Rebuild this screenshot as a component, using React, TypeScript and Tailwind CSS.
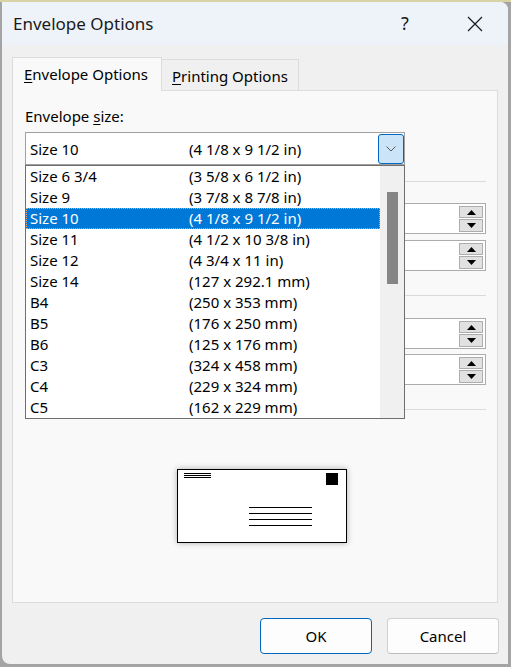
import React from 'react';

const SIZES: { name: string; dim: string }[] = [
  { name: 'Size 6 3/4', dim: '(3 5/8 x 6 1/2 in)' },
  { name: 'Size 9', dim: '(3 7/8 x 8 7/8 in)' },
  { name: 'Size 10', dim: '(4 1/8 x 9 1/2 in)' },
  { name: 'Size 11', dim: '(4 1/2 x 10 3/8 in)' },
  { name: 'Size 12', dim: '(4 3/4 x 11 in)' },
  { name: 'Size 14', dim: '(127 x 292.1 mm)' },
  { name: 'B4', dim: '(250 x 353 mm)' },
  { name: 'B5', dim: '(176 x 250 mm)' },
  { name: 'B6', dim: '(125 x 176 mm)' },
  { name: 'C3', dim: '(324 x 458 mm)' },
  { name: 'C4', dim: '(229 x 324 mm)' },
  { name: 'C5', dim: '(162 x 229 mm)' },
];

const SELECTED = 'Size 10';

const SpinBox: React.FC<{ className?: string }> = ({ className = '' }) => (
  <div className={`w-[461px] flex justify-end ${className}`}>
    <div className="w-[190px] h-[31px] border border-[#acacac] bg-white flex justify-end">
      <div className="w-[24px] mr-[2px] pt-[2px] flex flex-col gap-px">
        <div className="h-[12px] bg-[#e1e1e1] border border-[#adadad] flex items-center justify-center">
          <svg width="9" height="5" viewBox="0 0 9 5"><path d="M0 5 L4.5 0 L9 5 Z" fill="#000" /></svg>
        </div>
        <div className="h-[13px] bg-[#e1e1e1] border border-[#adadad] flex items-center justify-center">
          <svg width="9" height="5" viewBox="0 0 9 5"><path d="M0 0 L4.5 5 L9 0 Z" fill="#000" /></svg>
        </div>
      </div>
    </div>
  </div>
);

const Separator: React.FC<{ className?: string }> = ({ className = '' }) => (
  <div className={`w-[461px] h-px bg-[#dadada] ${className}`}></div>
);

const App: React.FC = () => {
  return (
    <div className="w-[511px] h-[667px] bg-[#a4a4a4] overflow-hidden text-black font-['Noto_Sans','DejaVu_Sans',sans-serif]">
      <div className="h-[2px] bg-[#d8d3a5]"></div>

      <div className="ml-[2px] w-[506px] h-[662px] rounded-tr-[8px] rounded-bl-[8px] bg-[#f0f0f0] overflow-hidden flex flex-col">
        {/* Title bar */}
        <div className="h-[43px] bg-[#eef3f9] flex items-center justify-between shrink-0">
          <span className="pl-[11px] text-[17px] leading-[23px] text-[#1a1a1a]">Envelope Options</span>
          <div className="flex items-center gap-[24px] mr-[10px]">
            <span className="w-[46px] text-center text-[18px] leading-[23px] text-[#1a1a1a]">?</span>
            <span className="w-[46px] flex justify-center">
              <svg width="16" height="16" viewBox="0 0 16 16">
                <path d="M1 1 L15 15 M15 1 L1 15" stroke="#1a1a1a" strokeWidth="1.2" />
              </svg>
            </span>
          </div>
        </div>

        {/* Body */}
        <div className="flex-1 flex flex-col pt-[12px]">
          <div className="px-[10px]">
            {/* Tabs */}
            <div className="flex items-end h-[33px]">
              <div className="relative z-10 -mb-px w-[150px] h-[34px] bg-[#f9f9f9] border border-b-0 border-[#dcdcdc] pl-[11px] pt-[6px] text-[15px] leading-[20px]">
                <span className="underline underline-offset-2">E</span>nvelope Options
              </div>
              <div className="w-[137px] h-[31px] bg-[#f0f0f0] border-t border-r border-[#dcdcdc] pl-[10px] pt-[6px] text-[15px] leading-[20px]">
                <span className="underline underline-offset-2">P</span>rinting Options
              </div>
            </div>

            {/* Panel */}
            <div className="h-[513px] border border-[#dcdcdc] bg-[#f9f9f9] px-[12px]">
              <div className="mt-[15px] text-[15px] leading-[20px]">
                Envelope <span className="underline underline-offset-2">s</span>ize:
              </div>

              {/* Combo box with open list */}
              <div className="relative mt-[6px] w-[380px]">
                <div className="h-[33px] border border-[#a0a0a0] bg-white flex items-center">
                  <span className="pl-[4px] w-[163px] text-[15px] leading-[20px]">Size 10</span>
                  <span className="text-[15px] leading-[20px]">(4 1/8 x 9 1/2 in)</span>
                  <div className="ml-auto w-[26px] h-[30px] bg-[#cce4f7] border border-[#0067c0] rounded-[3px] flex items-center justify-center">
                    <svg width="10" height="6" viewBox="0 0 10 6">
                      <path d="M0.5 0.5 L5 5 L9.5 0.5" stroke="#5a5a5a" strokeWidth="1" fill="none" />
                    </svg>
                  </div>
                </div>

                <div className="absolute left-0 top-[33px] z-20 w-[380px] h-[254px] border border-[#6e6e6e] bg-white flex">
                  <div className="flex-1 flex flex-col">
                    {SIZES.map(s => {
                      const sel = s.name === SELECTED;
                      return (
                        <div
                          key={s.name}
                          className={`h-[21px] flex items-center pl-[3px] border border-dotted text-[15px] leading-[21px] ${sel ? 'bg-[#0078d7] text-white border-[#f5a35a]' : 'border-transparent'}`}
                        >
                          <span className="w-[159px]">{s.name}</span>
                          <span>{s.dim}</span>
                        </div>
                      );
                    })}
                  </div>
                  <div className="w-[24px] bg-[#f0f0f0] pl-[7px] pt-[26px]">
                    <div className="w-[11px] h-[92px] bg-[#858585]"></div>
                  </div>
                </div>
              </div>

              {/* Fields mostly hidden by the open list */}
              <Separator className="mt-[16px]" />
              <SpinBox className="mt-[21px]" />
              <SpinBox className="mt-[6px]" />
              <Separator className="mt-[24px]" />
              <SpinBox className="mt-[22px]" />
              <SpinBox className="mt-[5px]" />
              <Separator className="mt-[24px]" />

              {/* Envelope preview */}
              <div className="mt-[59px] ml-[152px] relative w-[170px] h-[74px] bg-white border-[1.5px] border-black shadow-[0_0_6px_rgba(0,0,0,0.3)]">
                <svg className="absolute left-0 top-0" width="167" height="71" viewBox="0 0 167 71">
                  <path d="M6 3.5 H33 M6 5.5 H33 M6 7.5 H33" stroke="#000" strokeWidth="1" />
                  <rect x="148" y="3" width="12" height="12" fill="#000" />
                  <path d="M71 37.5 H134 M71 43.5 H134 M71 49.5 H134 M71 55.5 H134" stroke="#000" strokeWidth="1" />
                </svg>
              </div>
            </div>
          </div>

          {/* Buttons */}
          <div className="flex justify-end gap-[15px] pr-[9px] mt-[15px]">
            <button className="w-[112px] h-[36px] bg-[#fdfdfd] border border-[#0067c0] rounded-[4px] text-[15px] leading-[20px]">OK</button>
            <button className="w-[112px] h-[36px] bg-[#fdfdfd] border border-[#d0d0d0] border-b-[#bcbcbc] rounded-[4px] text-[15px] leading-[20px]">Cancel</button>
          </div>
        </div>
      </div>
    </div>
  );
};

export default App;
